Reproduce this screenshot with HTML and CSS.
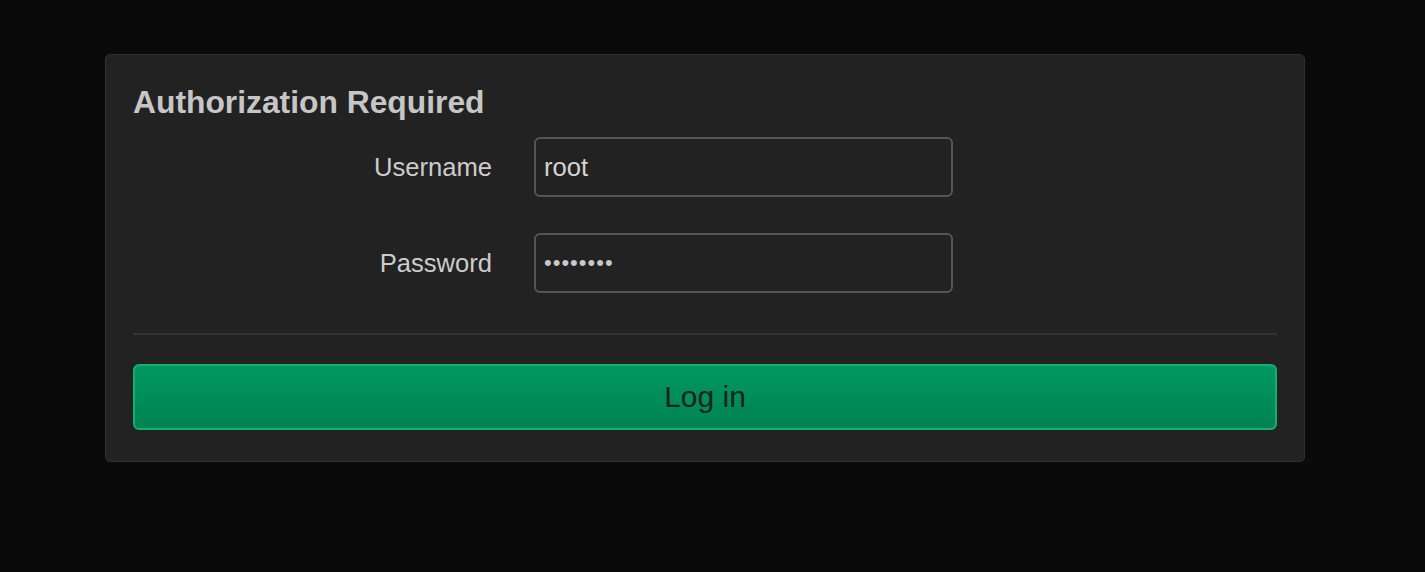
FILE: index.html
```html
<!DOCTYPE html>
<html lang="en">
<head>
<meta charset="utf-8">
<title>Authorization Required</title>
<link rel="stylesheet" href="styles.css">
</head>
<body>
<div class="page">
  <form class="card" onsubmit="return false">
    <h2 class="title">Authorization Required</h2>
    <div class="fields">
      <label class="label" for="user">Username</label>
      <input class="input" id="user" type="text" value="root">
      <label class="label" for="pass">Password</label>
      <input class="input" id="pass" type="password" value="12345678">
    </div>
    <hr class="divider">
    <button class="btn" type="submit">Log in</button>
  </form>
</div>
</body>
</html>
```
FILE: styles.css
```css
html, body {
  margin: 0;
  padding: 0;
  background: #0a0a0a;
  font-family: "Liberation Sans", Arial, Helvetica, sans-serif;
  height: 100%;
}

.page {
  padding: 54px 120px 0 105px;
}

.card {
  box-sizing: border-box;
  width: 1200px;
  background: #222222;
  border: 1px solid #303030;
  border-radius: 5px;
  padding: 29px 27px 31px 27px;
  display: flex;
  flex-direction: column;
}

.title {
  margin: 0;
  font-size: 31.8px;
  line-height: 36px;
  font-weight: bold;
  color: #c6c6c6;
}

.fields {
  margin-top: 17px;
  display: grid;
  grid-template-columns: 359px 418px;
  column-gap: 42px;
  row-gap: 36px;
  align-items: center;
}

.label {
  text-align: right;
  font-size: 25.6px;
  color: #cccccc;
}

.input {
  box-sizing: border-box;
  height: 60px;
  width: 419px;
  margin: 0;
  padding: 0 8px;
  background: #222222;
  border: 2px solid #555555;
  border-radius: 6px;
  color: #d4d4d4;
  font-family: "Liberation Sans", Arial, Helvetica, sans-serif;
  font-size: 25.6px;
  outline: none;
}

#pass {
  font-size: 22px;
  letter-spacing: 1px;
  color: #c8c8c8;
}

.divider {
  margin: 40px 0 0 0;
  border: 0;
  border-top: 2px solid #333333;
  height: 0;
}

.btn {
  margin-top: 29px;
  box-sizing: border-box;
  height: 66px;
  width: 100%;
  border: 2px solid #14b070;
  border-radius: 6px;
  background: linear-gradient(to bottom, #009763, #008254);
  color: #1c2420;
  font-family: "Liberation Sans", Arial, Helvetica, sans-serif;
  font-size: 30px;
  cursor: pointer;
}
```
